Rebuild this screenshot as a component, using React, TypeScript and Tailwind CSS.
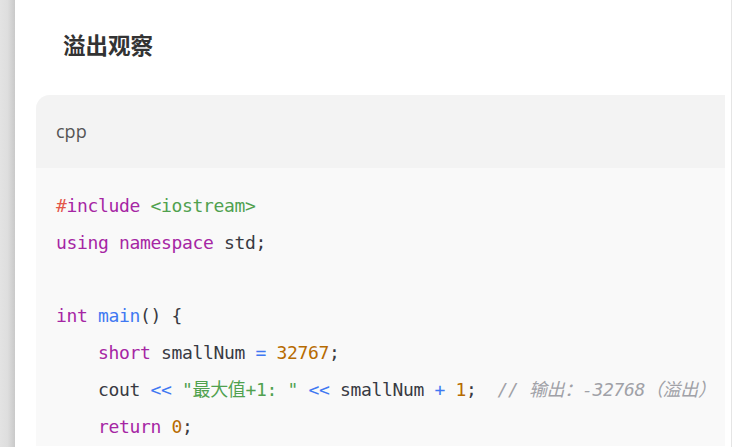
import React from "react";

const kw = "text-[#a626a4]";
const fn = "text-[#4078f2]";
const op = "text-[#4078f2]";
const str = "text-[#50a14f]";
const num = "text-[#b76b01]";
const txt = "text-[#383a42]";

const App = () => {
  return (
    <div className="w-[732px] h-[447px] overflow-hidden flex bg-white">
      <div className="w-[15px] shrink-0 bg-gradient-to-r from-[#e3e3e3] via-[#dedede] to-[#c9c9c9]" />
      <div className="flex-1 pl-[21px] pr-[6px]">
        {/* TITLE */}
        <h2
          className="h-[95px] pt-[28px] pl-[27px] text-[22.5px] font-bold text-[#333] leading-[32px]"
          style={{ fontFamily: '"Noto Sans CJK SC", sans-serif' }}
        >
          溢出观察
        </h2>

        {/* CODE BLOCK */}
        <div className="rounded-tl-[14px] overflow-hidden bg-[#f9f9f9]">
          <div
            className="h-[73px] bg-[#f3f3f3] flex items-center pl-[20px] text-[18px] text-[#555]"
            style={{ fontFamily: '"Open Sans", "Noto Sans CJK SC", sans-serif' }}
          >
            cpp
          </div>
          <pre
            className={`pt-[20px] pl-[20px] text-[18px] tracking-[-0.34px] leading-[36.8px] ${txt}`}
            style={{ fontFamily: '"DejaVu Sans Mono", "Noto Sans CJK SC", monospace' }}
          >
            <div>
              <span className="text-[#e45649]">#</span>
              <span className={kw}>include</span> <span className={str}>&lt;iostream&gt;</span>
            </div>
            <div>
              <span className={kw}>using</span> <span className={kw}>namespace</span> std;
            </div>
            <div>{" "}</div>
            <div>
              <span className={kw}>int</span> <span className={fn}>main</span>() {"{"}
            </div>
            <div>
              {"    "}
              <span className={kw}>short</span> smallNum <span className={op}>=</span>{" "}
              <span className={num}>32767</span>;
            </div>
            <div>
              {"    "}cout <span className={op}>&lt;&lt;</span>{" "}
              <span className={str}>"最大值+1: "</span> <span className={op}>&lt;&lt;</span>{" "}
              smallNum <span className={op}>+</span> <span className={num}>1</span>;{"  "}
              <span className="italic text-[#a0a1a7]">// 输出：-32768（溢出）</span>
            </div>
            <div>
              {"    "}
              <span className={kw}>return</span> <span className={num}>0</span>;
            </div>
          </pre>
        </div>
      </div>
      <div className="w-[1px] shrink-0 bg-[#e5e5e5]" />
    </div>
  );
};

export default App;
